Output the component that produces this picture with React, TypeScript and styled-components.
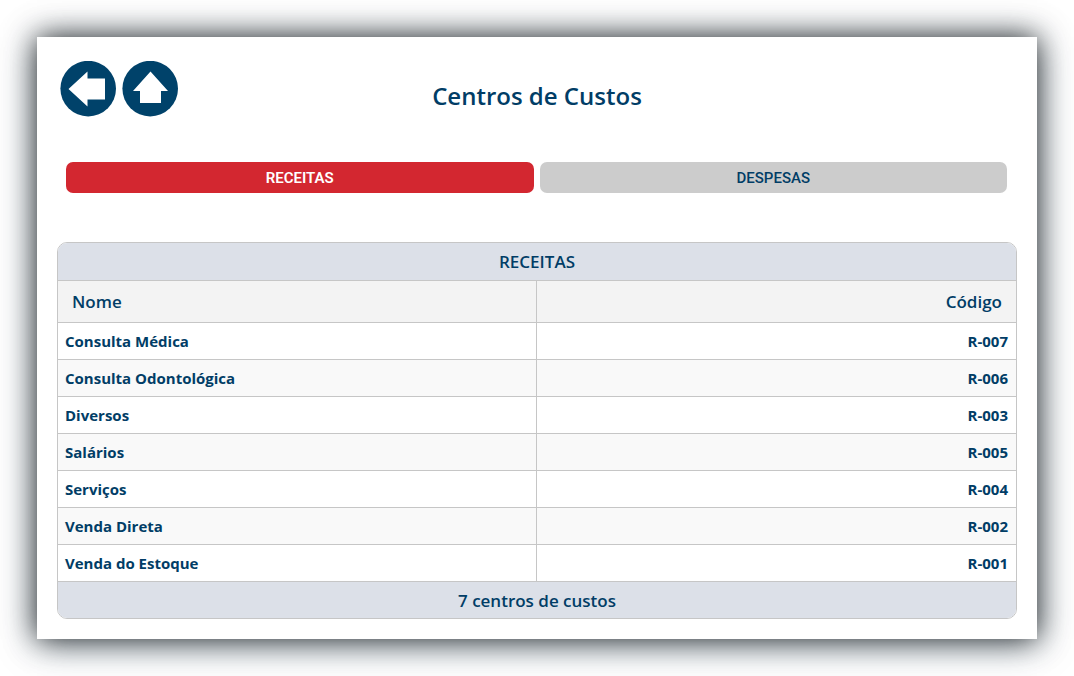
import React from "react";
import styled, { createGlobalStyle } from "styled-components";

const navy = "#013d66";
const line = "#c6c6c6";

const GlobalStyle = createGlobalStyle`
  *, *::before, *::after { box-sizing: border-box; }
  body {
    margin: 0;
    background: #fff;
    color: ${navy};
    font-family: "Open Sans", "Noto Sans", sans-serif;
  }
`;

const Page = styled.div`
  padding: 37px;
`;

const Card = styled.main`
  padding: 20px;
  background: #fff;
  box-shadow: 0 0 28px rgba(0, 0, 0, 0.8), 0 4px 38px rgba(0, 50, 80, 0.35);
`;

const Header = styled.header`
  display: grid;
  grid-template-columns: 1fr auto 1fr;
  align-items: center;
  min-height: 64px;
  padding: 0 3px;
`;

const Nav = styled.nav`
  display: flex;
  gap: 6px;
`;

const NavLink = styled.a`
  display: block;
  width: 56px;
  height: 56px;
  svg { display: block; }
`;

const Title = styled.h1`
  margin: 14px 0 0;
  font-size: 24px;
  line-height: 32px;
  font-weight: 600;
`;

const Tabs = styled.div`
  display: flex;
  gap: 6px;
  margin: 41px 0 49px;
  padding: 0 10px 0 9px;
`;

const Tab = styled.button<{ $active?: boolean }>`
  flex: 1;
  height: 31px;
  padding: 0;
  border: 0;
  border-radius: 7px;
  background: ${(p) => (p.$active ? "#d32730" : "#ccc")};
  color: ${(p) => (p.$active ? "#fff" : navy)};
  font-family: Roboto, sans-serif;
  font-size: 15px;
  font-weight: ${(p) => (p.$active ? 600 : 500)};
  cursor: pointer;
`;

const Table = styled.table`
  width: 100%;
  table-layout: fixed;
  border: 1px solid ${line};
  border-radius: 10px;
  border-spacing: 0;
  overflow: hidden;
`;

const Band = styled.th<{ $foot?: boolean }>`
  height: ${(p) => (p.$foot ? 36 : 37)}px;
  padding: ${(p) => (p.$foot ? "2px 0 0" : "0")};
  background: #dce0e8;
  font-size: 17px;
  line-height: 22px;
  font-weight: 600;
  text-align: center;
`;

const HeadCell = styled.th<{ $end?: boolean }>`
  height: 43px;
  padding: 0 14px;
  border-top: 1px solid ${line};
  border-bottom: 1px solid ${line};
  border-right: ${(p) => (p.$end ? "0" : `1px solid ${line}`)};
  background: #f3f3f3;
  font-size: 17px;
  line-height: 22px;
  font-weight: 600;
  text-align: ${(p) => (p.$end ? "right" : "left")};
`;

const Row = styled.tr`
  background: #fff;
  &:nth-child(even) { background: #f9f9f9; }
`;

const Cell = styled.td<{ $end?: boolean }>`
  height: 37px;
  padding: 0 8px 0 7px;
  border-bottom: 1px solid ${line};
  border-right: ${(p) => (p.$end ? "0" : `1px solid ${line}`)};
  font-size: 15px;
  line-height: 20px;
  font-weight: 700;
  text-align: ${(p) => (p.$end ? "right" : "left")};
`;

const items = [
  ["Consulta Médica", "R-007"],
  ["Consulta Odontológica", "R-006"],
  ["Diversos", "R-003"],
  ["Salários", "R-005"],
  ["Serviços", "R-004"],
  ["Venda Direta", "R-002"],
  ["Venda do Estoque", "R-001"],
];

export default function App() {
  return (
    <Page>
      <GlobalStyle />
      <Card>
        <Header>
          <Nav>
            <NavLink href="#voltar" aria-label="Voltar">
              <svg width="56" height="56" viewBox="0 0 56 56">
                <circle cx="28.2" cy="27.6" r="27.8" fill="#00426a" />
                <path d="M8.5 28 27.5 10.5V17.5H45V38.5H27.5V45.5Z" fill="#fff" />
              </svg>
            </NavLink>
            <NavLink href="#inicio" aria-label="Início">
              <svg width="56" height="56" viewBox="0 0 56 56">
                <circle cx="28.2" cy="27.6" r="27.8" fill="#00426a" />
                <path d="M28.5 10.5 46 30H39V42H18V30H11Z" fill="#fff" />
              </svg>
            </NavLink>
          </Nav>
          <Title>Centros de Custos</Title>
        </Header>
        <Tabs role="tablist">
          <Tab type="button" role="tab" aria-selected="true" $active>RECEITAS</Tab>
          <Tab type="button" role="tab" aria-selected="false">DESPESAS</Tab>
        </Tabs>
        <Table>
          <thead>
            <tr><Band colSpan={2}>RECEITAS</Band></tr>
            <tr>
              <HeadCell scope="col">Nome</HeadCell>
              <HeadCell scope="col" $end>Código</HeadCell>
            </tr>
          </thead>
          <tbody>
            {items.map(([name, code]) => (
              <Row key={code}>
                <Cell>{name}</Cell>
                <Cell $end>{code}</Cell>
              </Row>
            ))}
          </tbody>
          <tfoot>
            <tr><Band as="td" colSpan={2} $foot>7 centros de custos</Band></tr>
          </tfoot>
        </Table>
      </Card>
    </Page>
  );
}
